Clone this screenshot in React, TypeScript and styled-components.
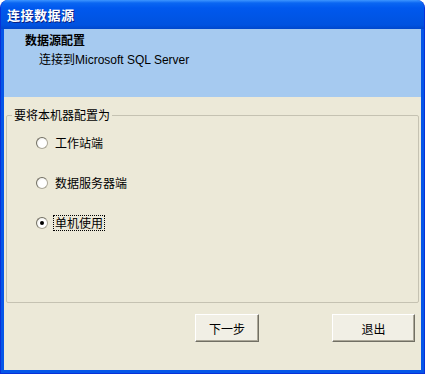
import * as React from 'react';
import styled, { createGlobalStyle } from 'styled-components';

const Global = createGlobalStyle`
  html, body {
    margin: 0;
    padding: 0;
    background: #ffffff;
  }
  body {
    font-family: "Liberation Sans", "Noto Sans CJK SC", sans-serif;
    font-size: 12px;
  }
`;

const Window = styled.div`
  width: 425px;
  height: 374px;
  display: flex;
  flex-direction: column;
  box-sizing: border-box;
  background: #0556e8;
  border: 1px solid #0831d9;
  border-top: none;
  border-radius: 8px 8px 0 0;
  overflow: hidden;
`;

const TitleBar = styled.div`
  height: 29px;
  flex: none;
  display: flex;
  align-items: center;
  padding-left: 6px;
  background: linear-gradient(
    to bottom,
    #3d95ff 0,
    #0a66f2 3px,
    #0058ee 8px,
    #0055e5 18px,
    #0052e0 25px,
    #0047cc 29px
  );
`;

const Title = styled.span`
  color: #ffffff;
  font-family: "Noto Sans CJK SC", sans-serif;
  font-weight: bold;
  font-size: 13px;
  letter-spacing: 0.5px;
  text-shadow: 1px 1px 0 #0a1e80;
`;

const Client = styled.div`
  flex: 1;
  margin: 0 3px 3px;
  background: #ece9d8;
  display: flex;
  flex-direction: column;
`;

const Header = styled.div`
  height: 68px;
  flex: none;
  background: #a6caf0;
  padding: 3px 0 0 21px;
  box-sizing: border-box;
`;

const HeaderTitle = styled.div`
  font-family: "Noto Sans CJK SC", sans-serif;
  font-weight: bold;
  font-size: 12px;
  line-height: 16px;
  color: #000000;
`;

const HeaderSub = styled.div`
  font-family: "Liberation Sans", "Noto Sans CJK SC", sans-serif;
  font-size: 12px;
  line-height: 16px;
  color: #000000;
  margin: 4px 0 0 14px;
`;

const Group = styled.fieldset`
  margin: 10px 2px 0;
  padding: 0;
  height: 196px;
  box-sizing: border-box;
  border: 1px solid #c5c2b2;
  border-radius: 2px;
  display: flex;
  flex-direction: column;
`;

const Legend = styled.legend`
  margin-left: 5px;
  padding: 0 2px;
  font-family: "Noto Sans CJK SC", sans-serif;
  font-size: 12px;
  line-height: 16px;
  color: #000000;
`;

const Options = styled.div`
  display: flex;
  flex-direction: column;
  gap: 24px;
  padding: 12px 0 0 29px;
`;

const Option = styled.label`
  display: flex;
  align-items: center;
  gap: 6px;
  height: 16px;
`;

const Radio = styled.span<{ $checked?: boolean }>`
  width: 12px;
  height: 12px;
  box-sizing: border-box;
  border-radius: 50%;
  border: 1px solid #aca899;
  border-top-color: #716f64;
  border-left-color: #716f64;
  background: radial-gradient(circle at 60% 60%, #ffffff 0, #ffffff 45%, #e2e0d6 100%);
  display: flex;
  align-items: center;
  justify-content: center;
  &::after {
    content: '';
    width: 4px;
    height: 4px;
    border-radius: 50%;
    background: #000000;
    display: ${p => (p.$checked ? 'block' : 'none')};
  }
`;

const OptionText = styled.span<{ $focused?: boolean }>`
  font-family: "Noto Sans CJK SC", sans-serif;
  font-size: 12px;
  line-height: 14px;
  color: #000000;
  padding: 0 1px;
  outline: ${p => (p.$focused ? '1px dotted #000000' : 'none')};
`;

const ButtonRow = styled.div`
  display: flex;
  padding: 11px 0 0 191px;
  gap: 73px;
`;

const Button = styled.button<{ $w: number }>`
  width: ${p => p.$w}px;
  height: 28px;
  box-sizing: border-box;
  background: #f1efe5;
  border: 1px solid #ffffff;
  border-right-color: #716f64;
  border-bottom-color: #716f64;
  box-shadow: inset -1px -1px 0 #aca899;
  font-family: "Noto Sans CJK SC", sans-serif;
  font-size: 12px;
  color: #000000;
  padding: 0;
`;

const options = ['工作站端', '数据服务器端', '单机使用'];

export default function App() {
  return (
    <>
      <Global />
      <Window>
        <TitleBar>
          <Title>连接数据源</Title>
        </TitleBar>
        <Client>
          <Header>
            <HeaderTitle>数据源配置</HeaderTitle>
            <HeaderSub>连接到Microsoft SQL Server</HeaderSub>
          </Header>
          <Group>
            <Legend>要将本机器配置为</Legend>
            <Options>
              {options.map((o, i) => (
                <Option key={o}>
                  <Radio $checked={i === 2} />
                  <OptionText $focused={i === 2}>{o}</OptionText>
                </Option>
              ))}
            </Options>
          </Group>
          <ButtonRow>
            <Button $w={64}>下一步</Button>
            <Button $w={83}>退出</Button>
          </ButtonRow>
        </Client>
      </Window>
    </>
  );
}
